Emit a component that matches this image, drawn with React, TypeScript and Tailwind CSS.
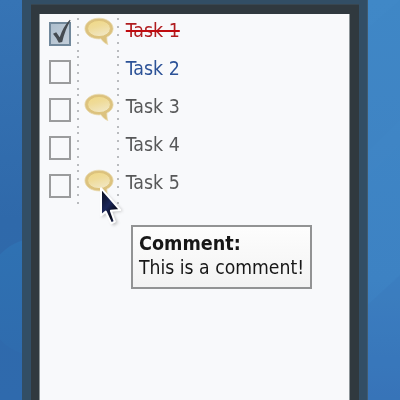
import React from "react";

type Task = { label: string; done?: boolean; comment?: boolean; color: string };

const tasks: Task[] = [
  { label: "Task 1", done: true, comment: true, color: "text-[#b01c1f]" },
  { label: "Task 2", color: "text-[#2c5297]" },
  { label: "Task 3", comment: true, color: "text-[#575859]" },
  { label: "Task 4", color: "text-[#575859]" },
  { label: "Task 5", comment: true, color: "text-[#575859]" },
];

function Dots() {
  return (
    <div className="flex h-[38px] w-[2px] shrink-0 flex-col gap-[6px] pt-[4px]">
      {[0, 1, 2, 3, 4].map((n) => (
        <i key={n} className="block h-[2px] w-[2px] shrink-0 bg-[#b9bbbe]" />
      ))}
    </div>
  );
}

function Bubble() {
  return (
    <svg width="30" height="29" viewBox="0 0 30 29" className="block">
      <defs>
        <linearGradient id="bubble" x1="0.2" y1="0" x2="0.6" y2="1">
          <stop offset="0" stopColor="#f0d988" />
          <stop offset="0.4" stopColor="#efdb98" />
          <stop offset="1" stopColor="#f1e7c4" />
        </linearGradient>
      </defs>
      <path
        d="M15 1.2C7.3 1.2 0.9 5.7 0.9 11.5C0.9 17.4 7 21.9 15 21.9L17 21.8C18.5 24.3 20.8 26.4 23.9 27.6C23 25.2 22.9 23.2 22.9 20C26.8 18.2 29.1 15.2 29.1 11.5C29.1 5.7 22.7 1.2 15 1.2Z"
        fill="#dcc27f"
        stroke="#e9dab0"
        strokeWidth="0.8"
      />
      <ellipse cx="15" cy="11.5" rx="11.4" ry="8.1" fill="url(#bubble)" stroke="#dcc279" strokeWidth="0.9" />
    </svg>
  );
}

function Check({ done }: { done?: boolean }) {
  if (!done) return <div className="h-[24px] w-[22px] border-2 border-[#9b9c9d] bg-[#f8f9fb]" />;
  return (
    <div className="relative h-[24px] w-[22px] border-2 border-[#71889b] bg-linear-to-br from-[#aebfce] to-[#c3ced9]">
      <svg width="26" height="28" viewBox="0 0 26 28" className="absolute -top-[5px] -left-[2px]">
        <path d="M4 14.8L7.2 13.2L10.7 18.2Q14 8 20.8 0.8L21.6 1.4Q16.2 10 13.2 23L9.8 23.8Q7.5 18.8 4 14.8Z" fill="#454b51" />
      </svg>
    </div>
  );
}

function Cursor() {
  return (
    <svg width="34" height="44" viewBox="0 0 34 44" className="absolute top-[185px] left-[96px]">
      <defs>
        <linearGradient id="arrow" x1="0" y1="0" x2="0.7" y2="1">
          <stop offset="0" stopColor="#080a14" />
          <stop offset="0.5" stopColor="#1b2659" />
          <stop offset="0.8" stopColor="#080a18" />
          <stop offset="1" stopColor="#25346f" />
        </linearGradient>
        <filter id="shade" x="-30%" y="-30%" width="170%" height="170%">
          <feGaussianBlur stdDeviation="1.5" />
        </filter>
      </defs>
      <path d="M6 4V33L12 29L17 41L22 38L17 28L27 26Z" fill="#777" opacity="0.4" filter="url(#shade)" />
      <path
        d="M5 3.2V30.5L9.8 26.6L15.2 38.4L18.8 36.6L14.9 25.8L24.2 25Z"
        fill="url(#arrow)"
        stroke="#fff"
        strokeWidth="2"
        strokeLinejoin="round"
      />
    </svg>
  );
}

export default function App() {
  return (
    <div className="relative h-[400px] w-[400px] overflow-hidden bg-[#3a7dbf] font-['DejaVu_Sans_Condensed','DejaVu_Sans',sans-serif] [font-stretch:condensed]">
      <svg width="400" height="400" className="absolute inset-0">
        <defs>
          <linearGradient id="fade" x1="0" y1="0" x2="0" y2="1">
            <stop offset="0" stopColor="#4088c7" />
            <stop offset="0.7" stopColor="#3d82c3" />
            <stop offset="1" stopColor="#3774b9" />
          </linearGradient>
          <linearGradient id="left" x1="0" y1="0" x2="0" y2="1">
            <stop offset="0" stopColor="#3674b5" />
            <stop offset="0.55" stopColor="#2f69aa" />
            <stop offset="1" stopColor="#2f6aad" />
          </linearGradient>
          <linearGradient id="disc" x1="0" y1="0" x2="0" y2="1">
            <stop offset="0" stopColor="#2f73b4" />
            <stop offset="1" stopColor="#2f6cae" />
          </linearGradient>
        </defs>
        <rect width="100" height="400" fill="url(#left)" />
        <ellipse cx="34" cy="297" rx="50" ry="58" fill="url(#disc)" opacity="0.85" />
        <rect x="300" width="100" height="400" fill="url(#fade)" />
        <path d="M360 160L400 120V145L360 182Z" fill="#468ecb" opacity="0.2" />
        <path d="M360 35L400 0V145L360 182Z" fill="#3f83c3" opacity="0.3" />
        <path d="M360 312L400 275V400H360Z" fill="#3873b8" opacity="0.25" />
      </svg>
      <div className="relative ml-[22px] h-[400px] w-[346px] border-r border-[#415b70] bg-[#324e65] pr-[8px] pl-[9px] pt-[4px]">
        <div className="h-[396px] border-t border-[#384650] bg-[#30393f] pr-[9px] pl-[8px] pt-[9px]">
          <div className="h-full w-[311px] border-x border-[#8c9497] bg-[#f8f9fb]">
            {tasks.map((t) => (
              <div key={t.label} className="flex h-[38px] items-start">
                <div className="w-[37px] pt-[8px] pl-[8.5px]">
                  <Check done={t.done} />
                </div>
                <Dots />
                <div className="w-[38px] pt-[3px] pl-[5px]">{t.comment && <Bubble />}</div>
                <Dots />
                <div className={`origin-left scale-x-[0.97] pl-[7px] text-[20px] leading-[32px] whitespace-pre ${t.color}`}>
                  {t.done ? <s className="decoration-[#c00b0f] decoration-2">{t.label}</s> : t.label}
                </div>
              </div>
            ))}
          </div>
        </div>
      </div>
      <div className="absolute top-[225px] left-[131px] h-[64px] w-[181px] border-2 border-[#929394] bg-linear-to-b from-[#fdfdfd] to-[#f3f3f3] pt-[4px] pl-[6px] text-[20px] leading-[24px] whitespace-pre text-[#171717]">
        <div className="w-max origin-left scale-x-[0.98] font-bold">Comment:</div>
        <div className="w-max origin-left scale-x-[0.96]">This is a comment!</div>
      </div>
      <Cursor />
    </div>
  );
}
